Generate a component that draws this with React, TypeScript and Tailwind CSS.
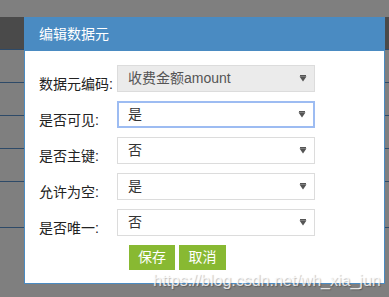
import React from 'react';

const fields = [
  { label: '数据元编码:', value: '收费金额amount', disabled: true },
  { label: '是否可见:', value: '是', focused: true },
  { label: '是否主键:', value: '否' },
  { label: '允许为空:', value: '是' },
  { label: '是否唯一:', value: '否' },
];

const font = { fontFamily: '"Liberation Sans", "Noto Sans CJK SC", sans-serif' };

// petite flèche du select
const Arrow = () => (
  <svg width="8" height="7" viewBox="0 0 8 7" className="shrink-0">
    <rect x="1" y="0" width="6" height="1.5" fill="#555" />
    <path d="M0.5 1.5 H7.5 L4 6.5 Z" fill="#555" />
  </svg>
);

const App = () => {
  return (
    <div className="relative w-[389px] h-[297px] overflow-hidden bg-[#7f7f7f]" style={font}>
      {/* tableau derrière le modal */}
      <div className="pt-[17px]">
        <div className="h-[33px] bg-[#4a4a4a] border-b border-[#2e4a68]" />
        <div className="h-[33px] border-b border-[#2e4a68]" />
        <div className="h-[33px] border-b border-[#2e4a68]" />
        <div className="h-[33px] border-b border-[#2e4a68]" />
        <div className="h-[33px] border-b border-[#2e4a68]" />
        <div className="h-[46px] border-b border-[#2e4a68]" />
      </div>

      {/* Modal */}
      <div className="absolute left-[24px] top-[17px] w-[361px] h-[267px] border border-[#4a8bc2] bg-white flex flex-col">
        <div className="h-[33px] bg-[#4a8bc2] flex items-center pl-[14px] text-white text-[14px]">编辑数据元</div>
        <div className="flex flex-col gap-[9px] pt-[14px] pl-[14px]">
          {fields.map((f) => (
            <div key={f.label} className="flex items-start">
              <div className="w-[78px] h-[27px] flex items-end text-[14px] leading-4 text-[#222]">{f.label}</div>
              <div
                className={
                  'w-[198px] h-[27px] flex items-center justify-between pr-[7px] text-[14px] ' +
                  (f.focused
                    ? 'border-2 border-[#9dbcf2] pl-[9px] text-[#333] bg-white'
                    : f.disabled
                      ? 'border border-[#dcdcdc] pl-[10px] bg-[#ebebeb] text-[#555]'
                      : 'border border-[#dcdcdc] pl-[10px] bg-white text-[#333]')
                }
              >
                <span>{f.value}</span>
                <Arrow />
              </div>
            </div>
          ))}
          <div className="flex gap-[4px] pl-[90px]">
            <button className="w-[46px] h-[25px] bg-[#88b932] text-white text-[14px]">保存</button>
            <button className="w-[47px] h-[25px] bg-[#88b932] text-white text-[14px]">取消</button>
          </div>
        </div>
      </div>

      {/* filigrane */}
      <div className="absolute left-[153px] top-[269px] text-[16px] text-white/80 [text-shadow:1px_1px_1px_rgba(0,0,0,0.25)] whitespace-nowrap">
        https://blog.csdn.net/wh_xia_jun
      </div>
    </div>
  );
};

export default App;
